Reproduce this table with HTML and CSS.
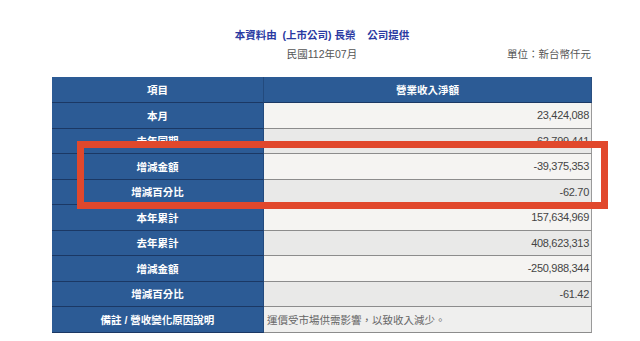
FILE: index.html
```html
<!DOCTYPE html>
<html lang="zh-Hant">
<head>
<meta charset="utf-8">
<link rel="stylesheet" href="styles.css">
</head>
<body>
<div class="page">
  <div class="title">本資料由  (上市公司) 長榮    公司提供</div>
  <div class="meta">
    <span class="spacer"></span>
    <span class="date">民國112年07月</span>
    <span class="unit">單位：新台幣仟元</span>
  </div>
  <div class="table-wrap">
    <table class="rev">
      <colgroup><col class="c1"><col class="c2"></colgroup>
      <thead>
        <tr class="head"><th>項目</th><th>營業收入淨額</th></tr>
      </thead>
      <tbody>
        <tr class="light"><th>本月</th><td>23,424,088</td></tr>
        <tr class="dark"><th>去年同期</th><td>62,799,441</td></tr>
        <tr class="light"><th>增減金額</th><td>-39,375,353</td></tr>
        <tr class="dark"><th>增減百分比</th><td>-62.70</td></tr>
        <tr class="light"><th>本年累計</th><td>157,634,969</td></tr>
        <tr class="dark"><th>去年累計</th><td>408,623,313</td></tr>
        <tr class="light"><th>增減金額</th><td>-250,988,344</td></tr>
        <tr class="dark"><th>增減百分比</th><td>-61.42</td></tr>
        <tr class="note"><th>備註 / 營收變化原因說明</th><td>運價受市場供需影響，以致收入減少。</td></tr>
      </tbody>
    </table>
    <div class="highlight"></div>
  </div>
</div>
</body>
</html>
```
FILE: styles.css
```css
html, body {
  margin: 0;
  padding: 0;
  background: #ffffff;
}
body {
  font-family: "Liberation Sans", "Noto Sans CJK TC", sans-serif;
  font-size: 10.5px;
  color: #555;
}
.page {
  width: 540px;
  margin-left: 52px;
  padding-top: 27px;
}
.title {
  text-align: center;
  white-space: pre;
  font-weight: bold;
  color: #2a3aa2;
  line-height: 16px;
  height: 16px;
}
.meta {
  display: grid;
  grid-template-columns: 1fr auto 1fr;
  margin-top: 3px;
  line-height: 16px;
  height: 16px;
  color: #555;
}
.unit {
  justify-self: end;
  padding-right: 1px;
  font-size: 10.5px;
}
.table-wrap {
  position: relative;
  margin-top: 15px;
}
.rev {
  border-collapse: separate;
  border-spacing: 0;
  table-layout: fixed;
  width: 540px;
}
.c1 { width: 212px; }
.c2 { width: 328px; }
.rev th, .rev td {
  padding: 0;
  box-sizing: border-box;
}
.rev th {
  background: #2c5b95;
  color: #ffffff;
  font-weight: bold;
  text-align: center;
  border-bottom: 1px solid #1b3864;
  border-right: 1px solid #234a7d;
}
.rev .head th {
  height: 26px;
}
.rev .head th:last-child {
  border-right: 1px solid #2a4f80;
}
.rev tbody tr {
  height: 25.5px;
}
.rev td {
  text-align: right;
  padding-right: 2px;
  font-size: 11px;
  letter-spacing: -0.3px;
  color: #444;
  border-bottom: 1px solid #8c8c8c;
  border-right: 1px solid #9a9a9a;
}
.rev .light td { background: #f5f4f2; }
.rev .dark td { background: #e9e9e8; }
.rev .note td {
  background: #efefee;
  text-align: left;
  padding-left: 3px;
  font-size: 10.5px;
  letter-spacing: 0;
  color: #666;
}
.highlight {
  position: absolute;
  left: 25px;
  top: 64px;
  width: 531px;
  height: 68px;
  box-sizing: border-box;
  border: 7px solid #e1482c;
}
```
